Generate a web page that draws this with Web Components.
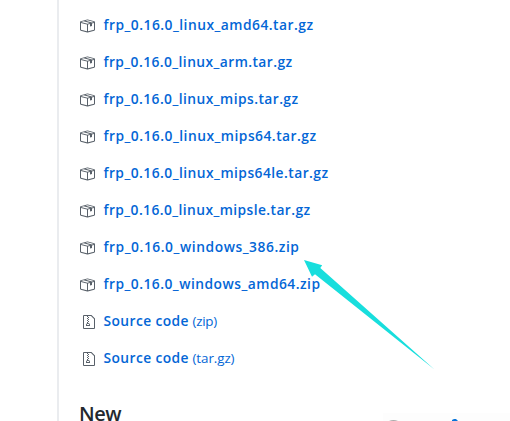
<!DOCTYPE html>
<html lang="en"><head><meta charset="utf-8"><title>frp release downloads</title>
<style>html,body{margin:0;background:#fff;overflow:hidden}</style></head><body>
<release-page>
<asset-row fit="210">frp_0.16.0_linux_amd64.tar.gz</asset-row>
<asset-row fit="189">frp_0.16.0_linux_arm.tar.gz</asset-row>
<asset-row fit="195">frp_0.16.0_linux_mips.tar.gz</asset-row>
<asset-row fit="213">frp_0.16.0_linux_mips64.tar.gz</asset-row>
<asset-row fit="225">frp_0.16.0_linux_mips64le.tar.gz</asset-row>
<asset-row fit="207">frp_0.16.0_linux_mipsle.tar.gz</asset-row>
<asset-row fit="196">frp_0.16.0_windows_386.zip</asset-row>
<asset-row fit="217">frp_0.16.0_windows_amd64.zip</asset-row>
<asset-row kind="zip" fit="85.5" note="(zip)" notefit="24.5">Source code</asset-row>
<asset-row kind="zip" fit="85.5" note="(tar.gz)" notefit="42">Source code</asset-row>
<span slot="heading">New</span>
</release-page>
<script>
const fitText = (el, target) => {
  const width = el.getBoundingClientRect().width;
  el.style.letterSpacing = (target - width) / el.textContent.length + 'px';
};
const icons = {
  box: '<svg width="16" height="16" viewBox="0 0 16 16"><path fill-rule="evenodd" d="M1 4.27v7.47c0 .45.3.84.75.97l6.5 1.73c.16.05.34.05.5 0l6.5-1.73c.45-.13.75-.52.75-.97V4.27c0-.45-.3-.84-.75-.97l-6.5-1.74a1.4 1.4 0 0 0-.5 0L1.75 3.3c-.45.13-.75.52-.75.97zm7 9.09l-6-1.59V5l6 1.61v6.75zM2 4l2.5-.67L11 5.06l-2.5.67L2 4zm13 7.77l-6 1.59V6.61l2-.55V8.5l2-.53V5.53L15 5v6.77zm-2-7.24L6.5 2.8l2-.53L15 4l-2 .53z"/></svg>',
  zip: '<svg width="12" height="16" viewBox="0 0 12 16"><path fill-rule="evenodd" d="M8.5 1H1a1 1 0 0 0-1 1v12a1 1 0 0 0 1 1h10a1 1 0 0 0 1-1V4.5L8.5 1zM11 14H1V2h3v1h1V2h3l3 3v9zM5 4V3h1v1H5zM4 4h1v1H4V4zm1 2V5h1v1H5zM4 6h1v1H4V6zm1 2V7h1v1H5zM4 9.28A2 2 0 0 0 3 11v1h4v-1a2 2 0 0 0-2-2V8H4v1.28zM6 10v1H4v-1h2z"/></svg>'
};
customElements.define('asset-icon', class extends HTMLElement {
  connectedCallback() {
    this.attachShadow({mode:'open'}).innerHTML = `<style>
      :host{display:flex;justify-content:flex-end;width:16px;height:16px;flex:none}
      svg{display:block;fill:#586069}</style>${icons[this.getAttribute('kind')]}`;
  }
});
customElements.define('asset-row', class extends HTMLElement {
  connectedCallback() {
    const note = this.getAttribute('note');
    this.attachShadow({mode:'open'}).innerHTML = `<style>
      :host{display:flex;align-items:center;height:37px;gap:8.5px;white-space:nowrap;color:#0366d6;font:13.8px/20px "Open Sans","Noto Sans",sans-serif}
      b{font-weight:600}
      .text{display:flex;gap:3.5px;padding-bottom:2px}
      .note{font-size:13.4px}</style>
      <asset-icon kind="${this.getAttribute('kind') || 'box'}"></asset-icon>
      <span class="text"><b></b>${note ? `<span class="note">${note}</span>` : ''}</span>`;
    const name = this.shadowRoot.querySelector('b');
    name.textContent = this.textContent;
    fitText(name, +this.getAttribute('fit'));
    if (note) fitText(this.shadowRoot.querySelector('.note'), +this.getAttribute('notefit'));
  }
});
customElements.define('pointer-arrow', class extends HTMLElement {
  connectedCallback() {
    this.attachShadow({mode:'open'}).innerHTML = `<style>
      :host{position:absolute;left:300px;top:256px;width:140px;height:118px}svg{display:block}</style>
      <svg width="140" height="118"><path fill="#18dedd" d="M4 4L22.2 9.2L20.3 12L134.5 113.5L15 18.2L12 20.7Z"/></svg>`;
  }
});
customElements.define('next-hint', class extends HTMLElement {
  connectedCallback() {
    this.attachShadow({mode:'open'}).innerHTML = `<style>
      :host{position:absolute;left:383px;top:413px;width:127px;height:8px;background:#fdfdfd}svg{display:block}</style>
      <svg width="127" height="8"><path fill="#aaa" d="M6 8Q10.5 6 15 8Z"/><path fill="#0874d9" d="M69 8V7L71 6H73L75 8Z"/></svg>`;
  }
});
customElements.define('release-page', class extends HTMLElement {
  connectedCallback() {
    this.attachShadow({mode:'open'}).innerHTML = `<style>
      :host{display:block;position:relative;box-sizing:border-box;width:510px;height:421px;overflow:hidden;background:#fff;padding-left:57px}
      main{box-sizing:border-box;height:421px;border-left:2px solid #eaecef;padding:7px 0 0 20px}
      h2{margin:30px 0 0;font:600 20px/14px "Open Sans","Noto Sans",sans-serif;color:#24292e;letter-spacing:-.5px}
      </style><main><slot></slot><h2><slot name="heading"></slot></h2></main>
      <next-hint></next-hint><pointer-arrow></pointer-arrow>`;
  }
});
</script></body></html>
